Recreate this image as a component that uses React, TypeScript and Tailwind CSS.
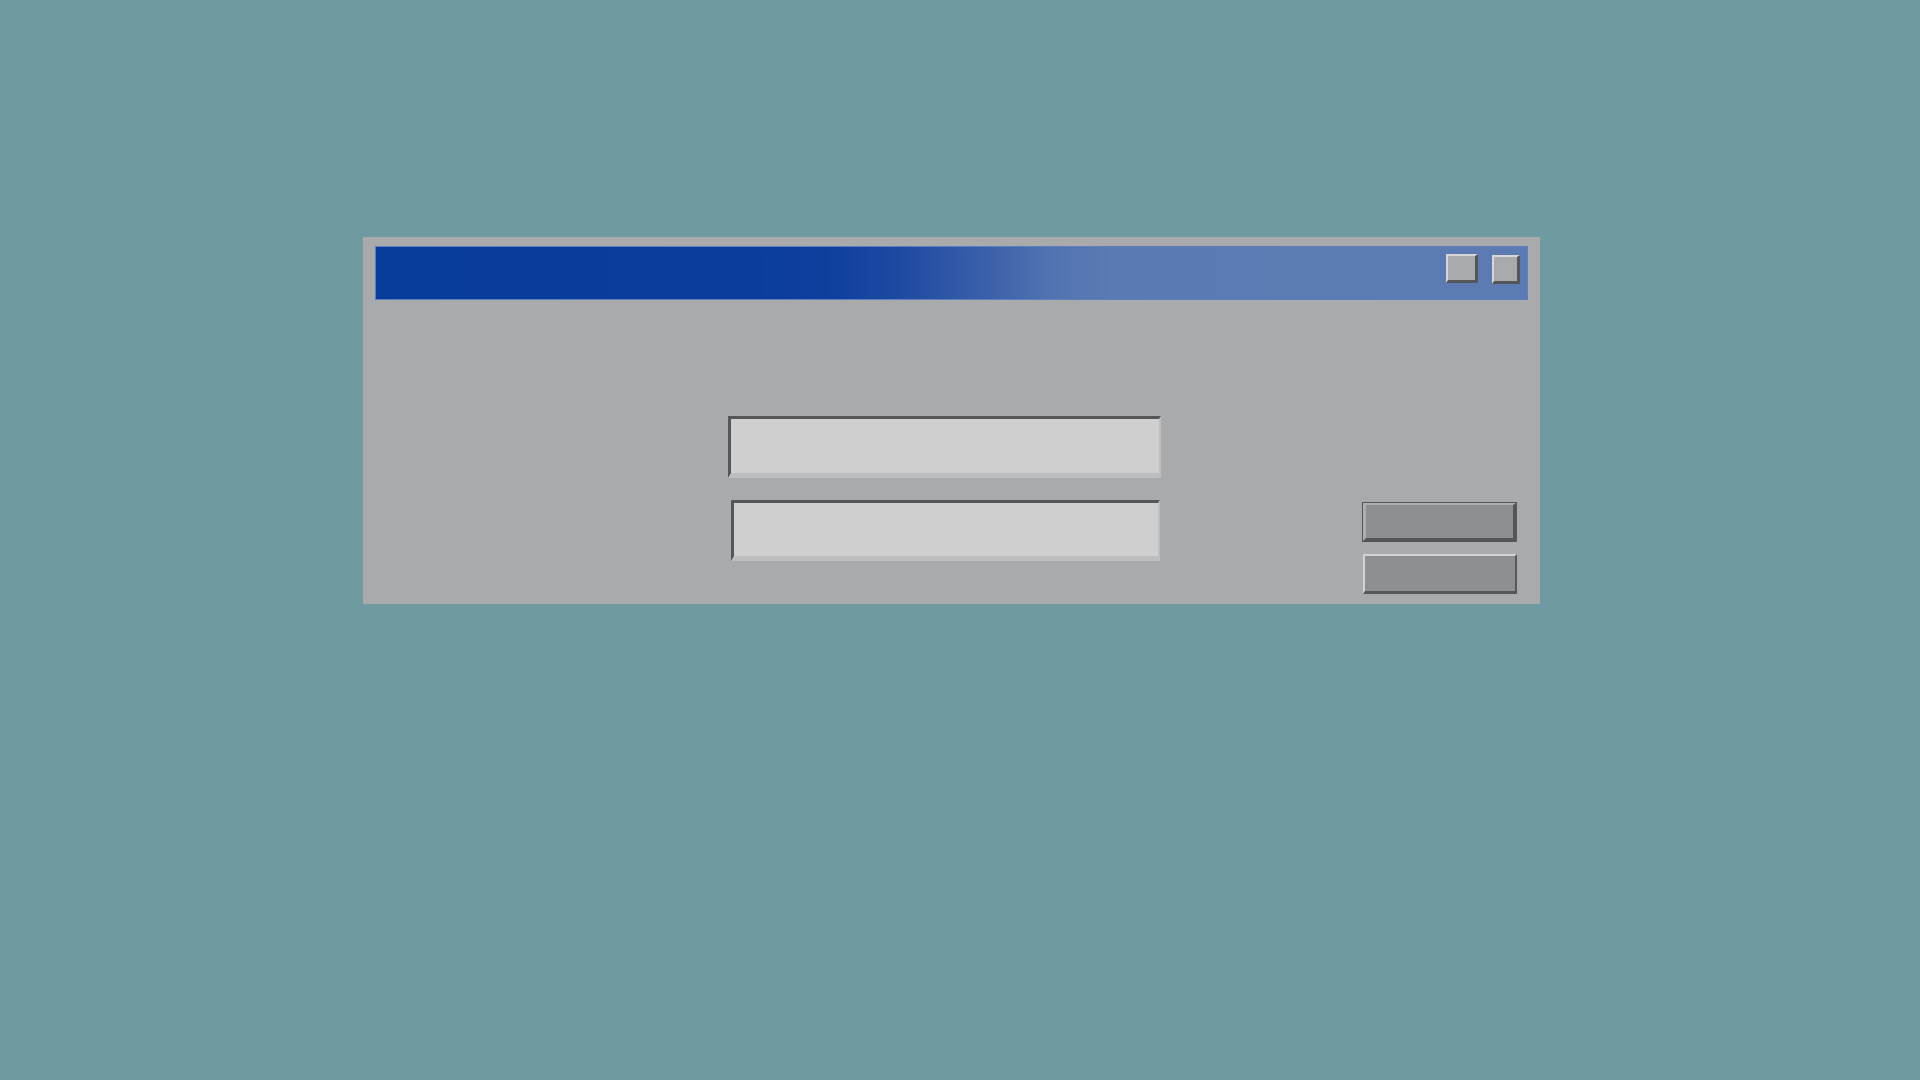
export default function App() {
  return (
    <div className="min-h-screen w-full bg-[#6e9aa0] pt-[237px] pl-[363px] font-['Liberation_Sans',sans-serif]">
      <div className="flex h-[367px] w-[1177px] flex-col bg-[#a9aaab] px-[12px] pt-[9px]">
        {/* title bar */}
        <div className="flex h-[54px] items-start justify-end border border-[#5d7fbd] bg-[linear-gradient(to_right,#083c9b_0%,#0a3d9c_32%,#103f9d_40%,#1f4ba2_46%,#3a60aa_53%,#5274b1_59%,#5a7ab3_64%,#5c7bb2_100%)] pr-[7px] pt-[7px]">
          <button className="h-[29px] w-[32px] border-t-2 border-l-2 border-b-[3px] border-r-[3px] border-t-[#d6d7d8] border-l-[#d6d7d8] border-b-[#555657] border-r-[#555657] bg-[#a9aaab]" />
          <button className="ml-[14px] mt-px h-[29px] w-[28px] border-t-2 border-l-2 border-b-[3px] border-r-[3px] border-t-[#d6d7d8] border-l-[#d6d7d8] border-b-[#555657] border-r-[#555657] bg-[#a9aaab]" />
        </div>

        {/* body */}
        <div className="flex flex-1 pb-[10px] pl-[353px] pr-[11px]">
          <div className="flex flex-col pt-[116px]">
            <div className="h-[62px] w-[433px] border-t-[3px] border-l-[3px] border-b-[5px] border-r-2 border-t-[#555657] border-l-[#555657] border-b-[#bdbebf] border-r-[#bdbebf] bg-[#cfcfcf]" />
            <div className="ml-[3px] mt-[22px] h-[61px] w-[429px] border-t-[3px] border-l-[3px] border-b-[5px] border-r-2 border-t-[#555657] border-l-[#555657] border-b-[#bdbebf] border-r-[#bdbebf] bg-[#cfcfcf]" />
          </div>
          <div className="ml-auto flex flex-col self-end">
            <div className="h-[40px] w-[155px] border border-[#555657]">
              <div className="h-full w-full border-t-2 border-l-[3px] border-b-[3px] border-r-[3px] border-t-[#adaeaf] border-l-[#adaeaf] border-b-[#555657] border-r-[#555657] bg-[#8e8f90]" />
            </div>
            <div className="ml-px mt-[12px] h-[40px] w-[154px] border-t-2 border-l-2 border-b-[3px] border-r-2 border-t-[#d2d3d4] border-l-[#d2d3d4] border-b-[#555657] border-r-[#555657] bg-[#8e8f90]" />
          </div>
        </div>
      </div>
    </div>
  );
}
